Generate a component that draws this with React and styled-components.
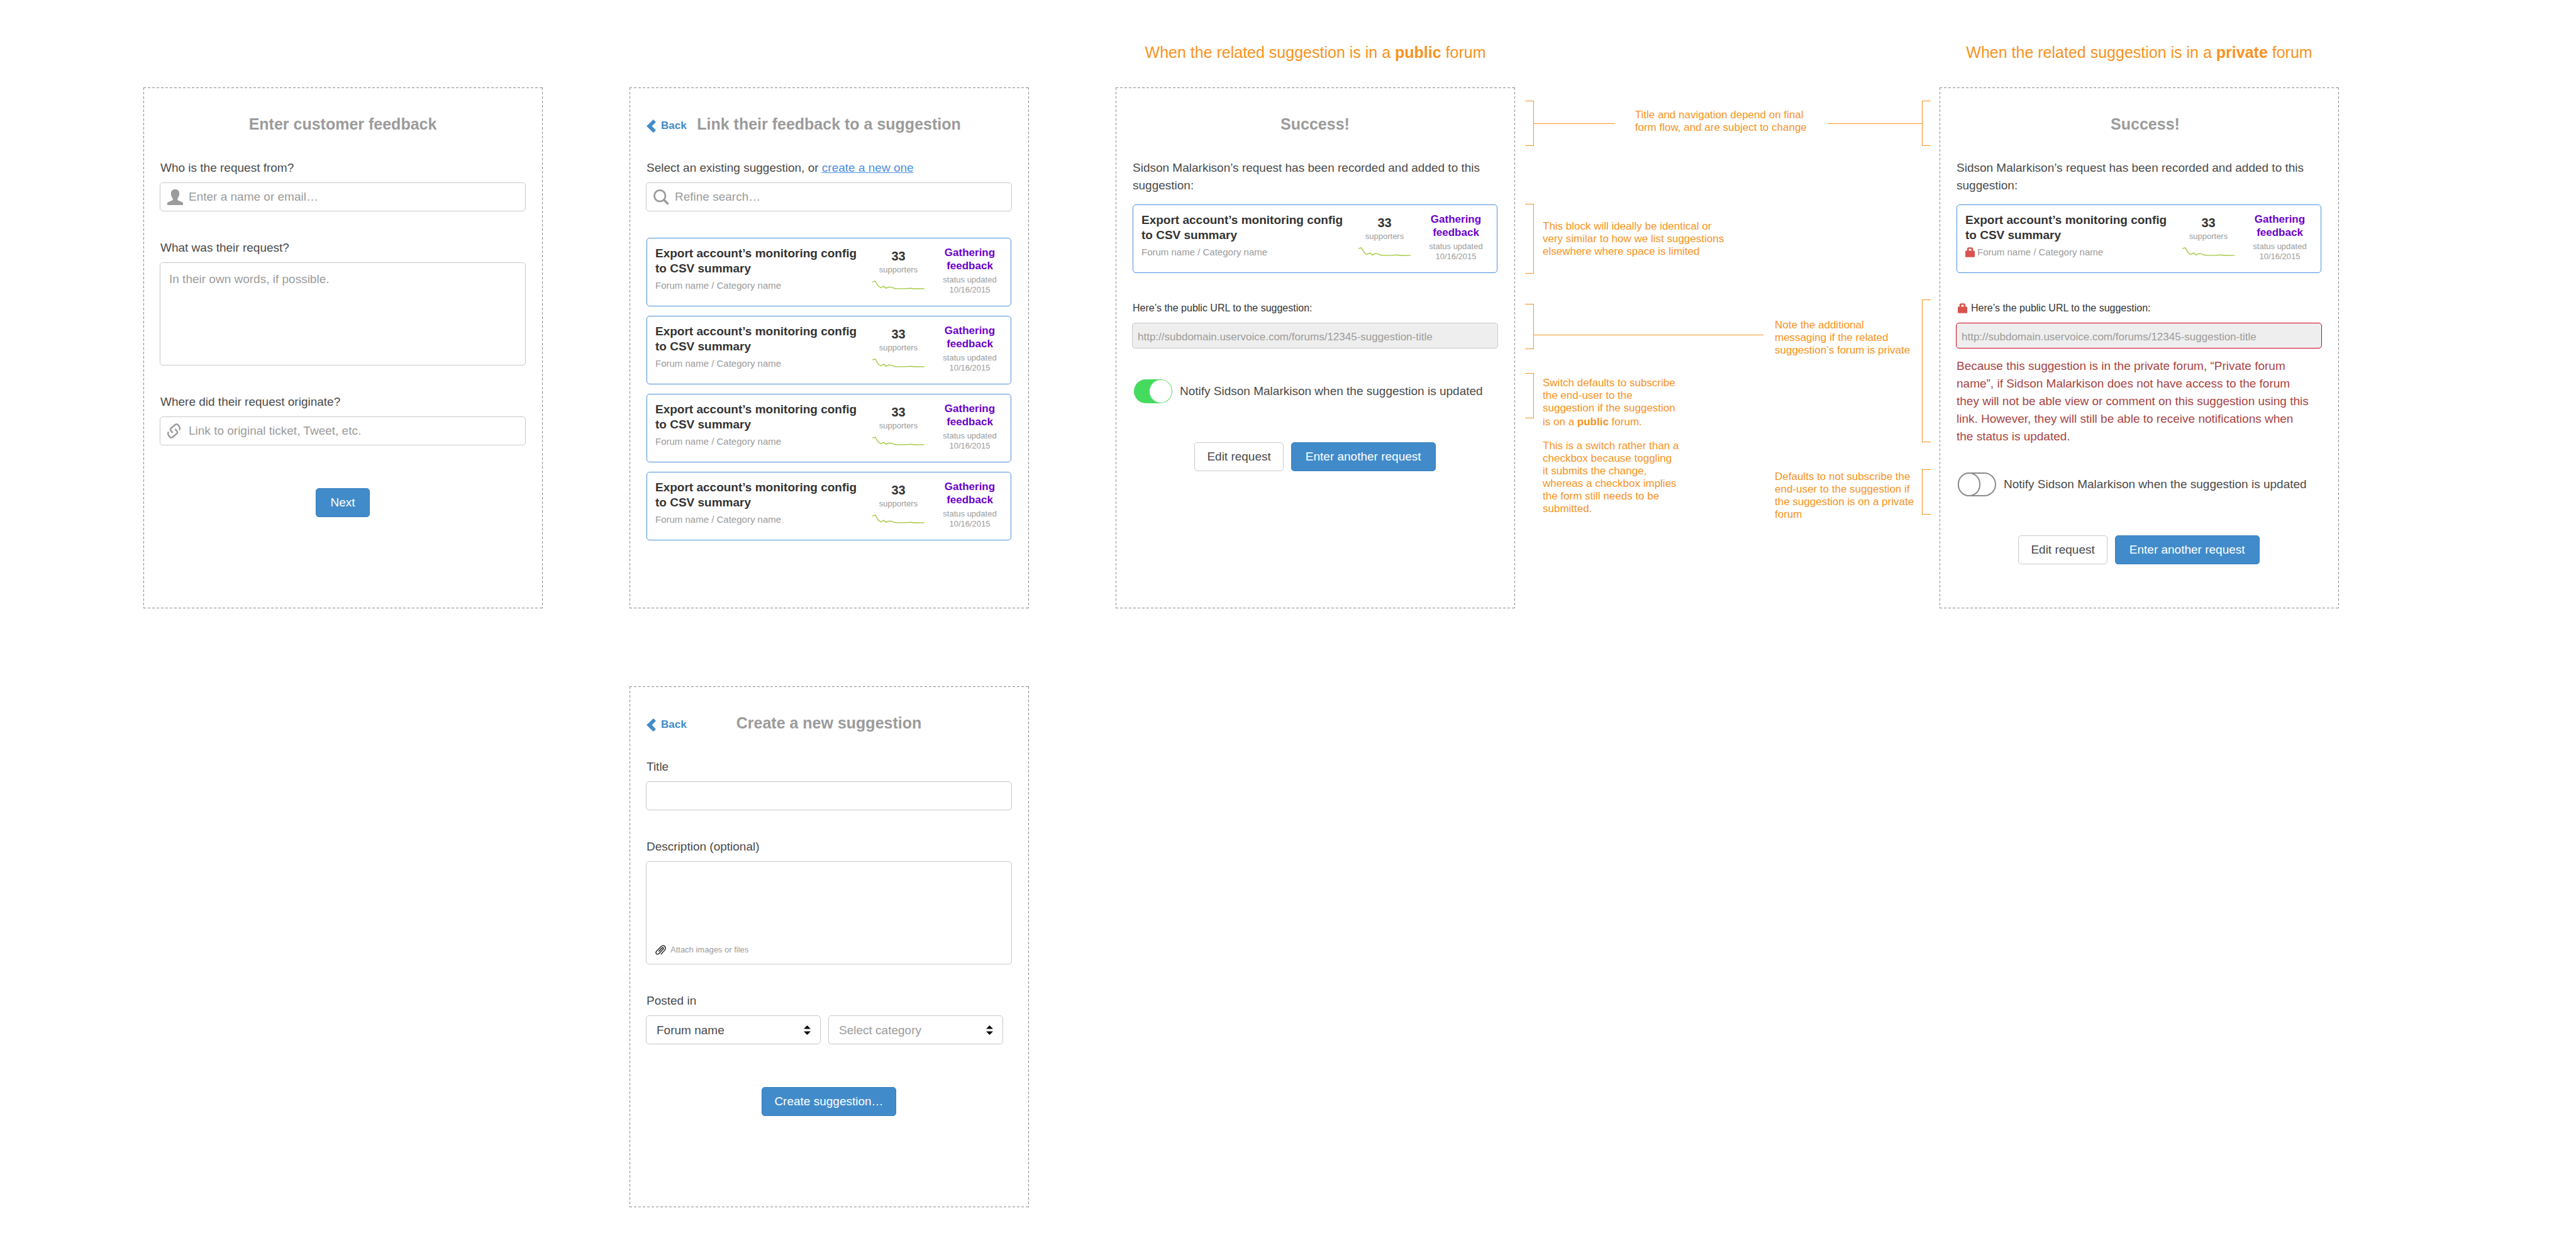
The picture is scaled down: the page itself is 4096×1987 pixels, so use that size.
import React, { useId } from "react";
import styled, { createGlobalStyle, css } from "styled-components";

const c = {
  text: "#4a4a4a",
  dark: "#333333",
  muted: "#9b9b9b",
  line: "#c8c8c8",
  dash: "#8c8c8c",
  primary: "#428bca",
  primaryEdge: "#357ebd",
  link: "#4a90e2",
  status: "#6a00cc",
  note: "#f7931e",
  danger: "#d9534f",
  dangerText: "#a94442",
  error: "#d0021b",
};

const GlobalStyle = createGlobalStyle`
  *, *::before, *::after { box-sizing: border-box; }
  body { margin: 0; background: #ffffff; }
  body, button, input, textarea, select {
    font-family: "Liberation Sans", Arial, Helvetica, sans-serif;
  }
  h1, h2, h3, p, ul { margin: 0; padding: 0; }
`;

/* ---------- Board ---------- */

const Board = styled.main`
  display: grid;
  grid-template-columns: 635fr 138fr 635fr 138fr 635fr 675fr 635fr;
  grid-template-rows: auto auto auto;
  padding: 0 377px 68px 228px;
  color: ${c.text};
  font-size: 19px;
  line-height: 28px;
`;

const BoardHeading = styled.h1`
  grid-row: 1;
  grid-column: ${(p) => p.$col};
  padding: 68px 0 41px;
  font-size: 25px;
  line-height: 30px;
  font-weight: 400;
  text-align: center;
  color: ${c.note};
`;

const dashX = `repeating-linear-gradient(90deg, ${c.dash} 0 4px, transparent 4px 7px)`;
const dashY = `repeating-linear-gradient(180deg, ${c.dash} 0 4px, transparent 4px 7px)`;

const Panel = styled.section`
  grid-row: ${(p) => p.$row || 2};
  grid-column: ${(p) => p.$col};
  margin-top: ${(p) => (p.$row === 3 ? 124 : 0)}px;
  min-height: 828px;
  padding: 43px 27px 40px 26px;
  background:
    ${dashX} top / 100% 1px no-repeat,
    ${dashX} bottom / 100% 1px no-repeat,
    ${dashY} left / 1px 100% no-repeat,
    ${dashY} right / 1px 100% no-repeat;
`;

const PanelHeader = styled.header`
  display: grid;
  grid-template-columns: 1fr auto 1fr;
  margin-bottom: 41px;
  padding-left: ${(p) => p.$indent || 0}px;
`;

const PanelTitle = styled.h2`
  grid-column: 2;
  font-size: 25px;
  line-height: 30px;
  font-weight: 700;
  color: ${c.muted};
`;

const BackLink = styled.a`
  display: flex;
  align-items: center;
  align-self: end;
  justify-self: start;
  gap: 8px;
  height: 24px;
  padding-left: 1px;
  font-size: 17px;
  font-weight: 700;
  color: ${c.primary};
  text-decoration: none;
`;

const InlineLink = styled.a`
  color: ${c.link};
  text-decoration: underline;
`;

/* ---------- Form parts ---------- */

const Field = styled.div`
  display: flex;
  flex-direction: column;
  gap: 9px;
  & + & {
    margin-top: 44px;
  }
`;

const labelStyle = css`
  display: flex;
  align-items: center;
  gap: 6px;
  padding-left: ${(p) => (p.$icon ? 3 : 1)}px;
  font-size: ${(p) => (p.$small ? 16 : 19)}px;
  color: ${(p) => (p.$small ? c.dark : c.text)};
`;

const Label = styled.label`
  ${labelStyle}
`;

const GroupLabel = styled.span`
  ${labelStyle}
`;

const LeadText = styled.p`
  padding-left: 1px;
`;

const Box = styled.div`
  display: flex;
  align-items: center;
  height: 46px;
  padding: 0 12px 0 11px;
  gap: 9px;
  border: 1px solid ${c.line};
  border-radius: 5px;
  background: #ffffff;
`;

const IconSlot = styled.span`
  display: flex;
  flex: none;
  width: 25px;
`;

const bareControl = css`
  flex: 1;
  min-width: 0;
  margin: 0;
  padding: 0;
  border: 0;
  outline: 0;
  background: transparent;
  font-size: 19px;
  line-height: 28px;
  color: ${c.text};
  &::placeholder {
    color: ${c.muted};
    opacity: 1;
  }
`;

const BareInput = styled.input`
  ${bareControl}
`;

const AreaBox = styled.div`
  display: flex;
  flex-direction: column;
  align-items: flex-start;
  height: 164px;
  padding: 12px 14px;
  border: 1px solid ${c.line};
  border-radius: 5px;
`;

const BareTextarea = styled.textarea`
  ${bareControl}
  width: 100%;
  resize: none;
`;

const AttachButton = styled.button`
  display: flex;
  align-items: center;
  gap: 7px;
  padding: 0;
  border: 0;
  background: none;
  font-size: 13px;
  line-height: 20px;
  color: ${c.muted};
`;

const UrlInput = styled.input`
  width: 100%;
  height: 41px;
  padding: 4px 8px 0;
  border: 1px solid ${(p) => (p.$error ? c.error : c.line)};
  border-radius: 5px;
  outline: 0;
  background: #eeeeee;
  font-size: 17px;
  color: ${c.muted};
`;

const ErrorText = styled.p`
  margin-top: 14px;
  padding-left: 1px;
  color: ${c.dangerText};
`;

const SelectRow = styled.div`
  display: flex;
  gap: 12px;
  padding-right: 14px;
`;

const SelectBox = styled.div`
  position: relative;
  flex: 1;
  & > svg {
    position: absolute;
    top: 16px;
    right: 16px;
    pointer-events: none;
  }
`;

const Select = styled.select`
  width: 100%;
  height: 46px;
  padding: 0 40px 0 16px;
  appearance: none;
  border: 1px solid ${c.line};
  border-radius: 5px;
  background: #ffffff;
  font-size: 19px;
  color: ${(p) => (p.$empty ? c.muted : c.text)};
`;

const Actions = styled.div`
  display: flex;
  justify-content: center;
  gap: 12px;
  margin-top: ${(p) => p.$gap}px;
`;

const Button = styled.button`
  height: 46px;
  padding: 0 ${(p) => (p.$wide ? 22 : 19)}px;
  border: 1px solid ${(p) => (p.$primary ? c.primaryEdge : c.line)};
  border-radius: 5px;
  background: ${(p) => (p.$primary ? c.primary : "#ffffff")};
  font-size: 19px;
  color: ${(p) => (p.$primary ? "#ffffff" : c.text)};
`;

const SwitchRow = styled.div`
  display: flex;
  align-items: center;
  gap: 12px;
  margin-top: ${(p) => p.$gap}px;
  padding-left: 3px;
`;

const Switch = styled.input`
  position: relative;
  flex: none;
  width: 61px;
  height: 38px;
  margin: 0;
  appearance: none;
  border: 2px solid #8c8c8c;
  border-radius: 19px;
  background: #ffffff;
  &::before {
    content: "";
    position: absolute;
    top: -2px;
    left: -2px;
    width: 36px;
    height: 38px;
    border: 2px solid #8c8c8c;
    border-radius: 19px;
    background: #ffffff;
  }
  &:checked {
    border: 0;
    background: #44db5e;
  }
  &:checked::before {
    top: 1px;
    left: auto;
    right: 1px;
    width: 35px;
    height: 36px;
    border: 0;
  }
`;

/* ---------- Suggestion card ---------- */

const CardList = styled.ul`
  display: flex;
  flex-direction: column;
  gap: 15px;
  margin-top: 42px;
  list-style: none;
`;

const Card = styled.article`
  display: flex;
  gap: 12px;
  margin: ${(p) => (p.$spaced ? "16px 1px 42px" : "0 1px")};
  padding: 12px 21px 17px 13px;
  border: 1px solid ${c.link};
  border-radius: 5px;
`;

const CardMain = styled.div`
  flex: 1;
  line-height: 24px;
`;

const CardTitle = styled.h3`
  font-size: 19px;
  font-weight: 700;
  color: ${c.dark};
`;

const CardMeta = styled.p`
  display: flex;
  align-items: center;
  gap: 4px;
  margin-top: 3px;
  font-size: 15px;
  color: ${c.muted};
`;

const CardSide = styled.div`
  display: flex;
  gap: 28px;
  text-align: center;
`;

const Stats = styled.div`
  width: 83px;
  padding-top: 4px;
`;

const Count = styled.p`
  font-size: 20px;
  line-height: 24px;
  font-weight: 700;
  color: ${c.dark};
`;

const Small = styled.p`
  margin-top: ${(p) => p.$top}px;
  font-size: 13px;
  line-height: 16px;
  color: ${c.muted};
`;

const StatusBlock = styled.div`
  width: 88px;
`;

const Status = styled.p`
  font-size: 17px;
  line-height: 21px;
  font-weight: 700;
  color: ${c.status};
`;

const Spark = styled.svg`
  display: block;
  margin-top: 9px;
`;

/* ---------- Annotations ---------- */

const Notes = styled.aside`
  grid-row: 2;
  grid-column: 6;
  padding: 21px 14px 0 16px;
  font-size: 17px;
  line-height: 20px;
  color: ${c.note};
`;

const NoteRow = styled.div`
  display: flex;
  align-items: ${(p) => (p.$center ? "center" : "flex-start")};
  margin-top: ${(p) => p.$gap || 0}px;
`;

const Bracket = styled.span`
  flex: none;
  width: 14px;
  height: ${(p) => p.$h}px;
  border: 1px solid ${c.note};
  border-left-width: ${(p) => (p.$open === "left" ? 0 : 1)}px;
  border-right-width: ${(p) => (p.$open === "left" ? 1 : 0)}px;
`;

const Rule = styled.span`
  flex: ${(p) => p.$grow};
  height: 1px;
  margin: ${(p) => p.$top || 0}px ${(p) => p.$end || 0}px 0 0;
  background: ${c.note};
`;

const SharedNote = styled.p`
  padding: 0 33px 6px 32px;
`;

const SideNote = styled.div`
  width: ${(p) => p.$w || 225}px;
  margin-left: 14px;
  padding-top: ${(p) => p.$top || 0}px;
  strong {
    line-height: 24px;
  }
  p + p {
    margin-top: 16px;
  }
`;

const EdgeNote = styled.p`
  width: 225px;
  margin-right: 9px;
  padding-top: ${(p) => p.$top}px;
`;

const Lanes = styled.div`
  display: flex;
  margin-top: 41px;
`;

const StartLane = styled.div`
  flex: 1;
  padding-top: 7px;
`;

const EndLane = styled.div`
  flex: none;
`;

/* ---------- Drawings ---------- */

const PersonIcon = () => (
  <svg width="25" height="25" viewBox="0 0 36 36" fill={c.muted} aria-hidden="true">
    <path d="M18 0C23.5 0 27.6 3.5 27.6 9.5C27.6 14 26 18 23.5 20.5V24C24.5 25.5 33 28 36 30.5V36H0V30.5C3 28 11.5 25.5 12.5 24V20.5C10 18 8.4 14 8.4 9.5C8.4 3.5 12.5 0 18 0Z" />
  </svg>
);

const LinkIcon = () => (
  <svg width="21" height="24" viewBox="0 0 93 106" fill="none" stroke={c.muted} strokeWidth="11" aria-hidden="true">
    <path d="M84 47L88 39Q90 33 86 27L76 11Q68 2 58 8L25 35Q19 42 24 50L38 67" />
    <path d="M9 59L5 67Q3 73 7 79L17 95Q25 104 35 98L68 71Q74 64 69 56L55 39" />
  </svg>
);

const SearchIcon = () => (
  <svg width="25" height="25" viewBox="0 0 36 36" fill="none" stroke={c.muted} aria-hidden="true">
    <circle cx="14.7" cy="14.7" r="12.7" strokeWidth="4" />
    <path d="M23.5 23.5L34 34" strokeWidth="5" />
  </svg>
);

const ChevronIcon = () => (
  <svg width="15" height="21" viewBox="0 0 22 31" fill={c.primary} aria-hidden="true">
    <path d="M0 15.5L16 0L22 6L12.5 15.5L22 25L16 31Z" />
  </svg>
);

const LockIcon = () => (
  <svg width="15" height="16" viewBox="0 0 22 23" fill={c.danger} aria-hidden="true">
    <path
      fillRule="evenodd"
      d="M4 8V4Q4 0 8 0H14Q18 0 18 4V8H20Q22 8 22 10V21Q22 23 20 23H2Q0 23 0 21V10Q0 8 2 8ZM8 8H14V4.5Q14 3.5 13 3.5H9Q8 3.5 8 4.5Z"
    />
  </svg>
);

const ClipIcon = () => (
  <svg width="17" height="16" viewBox="0 0 24 22" fill="none" stroke="#111111" strokeWidth="1.9" aria-hidden="true">
    <path d="M12.5 21L21 11.5C24 8 23 2.5 19 1.5C16.5 .9 14.5 2 13 3.5L2.5 14C.3 17 1.5 20.8 4.5 20.8C6 20.8 7.2 20 8.2 19L17.8 9C19.3 7 17.5 4.8 15.5 6.2L7.5 14.5" />
  </svg>
);

const SortIcon = () => (
  <svg width="11" height="15" viewBox="0 0 11 15" fill="#000000" aria-hidden="true">
    <path d="M5.5 0L11 5.5H0ZM5.5 15L11 9.5H0Z" />
  </svg>
);

const Sparkline = () => (
  <Spark width="83" height="14" viewBox="0 0 120 20" fill="none" stroke="#a2c63a" strokeWidth="2" aria-hidden="true">
    <path d="M0 3L6.7 1L13 12L19.6 16.5L25.7 13L32 17.5L38 14.5L44.7 15.3L51 18L57.5 18.5H75L90 17.5L95 18.7L120 18.5" />
  </Spark>
);

/* ---------- Composed pieces ---------- */

function TextField({ label, icon, placeholder }) {
  const id = useId();
  return (
    <Field>
      <Label htmlFor={id}>{label}</Label>
      <Box>
        {icon && <IconSlot>{icon}</IconSlot>}
        <BareInput id={id} type="text" placeholder={placeholder} />
      </Box>
    </Field>
  );
}

function AreaField({ label, placeholder, children }) {
  const id = useId();
  return (
    <Field>
      <Label htmlFor={id}>{label}</Label>
      <AreaBox>
        <BareTextarea id={id} placeholder={placeholder} />
        {children}
      </AreaBox>
    </Field>
  );
}

function UrlField({ locked }) {
  const id = useId();
  return (
    <Field>
      <Label htmlFor={id} $small $icon={locked}>
        {locked && <LockIcon />}
        Here’s the public URL to the suggestion:
      </Label>
      <UrlInput
        id={id}
        type="text"
        readOnly
        $error={locked}
        value="http://subdomain.uservoice.com/forums/12345-suggestion-title"
      />
    </Field>
  );
}

function SuggestionCard({ locked, spaced }) {
  return (
    <Card $spaced={spaced}>
      <CardMain>
        <CardTitle>
          Export account’s monitoring config
          <br />
          to CSV summary
        </CardTitle>
        <CardMeta>
          {locked && <LockIcon />}
          Forum name / Category name
        </CardMeta>
      </CardMain>
      <CardSide>
        <Stats>
          <Count>33</Count>
          <Small $top={2}>supporters</Small>
          <Sparkline />
        </Stats>
        <StatusBlock>
          <Status>Gathering feedback</Status>
          <Small $top={4}>status updated 10/16/2015</Small>
        </StatusBlock>
      </CardSide>
    </Card>
  );
}

function NotifySwitch({ on, gap }) {
  const id = useId();
  return (
    <SwitchRow $gap={gap}>
      <Switch id={id} type="checkbox" role="switch" defaultChecked={on} />
      <label htmlFor={id}>Notify Sidson Malarkison when the suggestion is updated</label>
    </SwitchRow>
  );
}

function Back() {
  return (
    <BackLink href="#back">
      <ChevronIcon />
      Back
    </BackLink>
  );
}

function ForumSelect({ label, option, empty }) {
  return (
    <SelectBox>
      <Select aria-label={label} $empty={empty} defaultValue={option}>
        <option>{option}</option>
      </Select>
      <SortIcon />
    </SelectBox>
  );
}

function SuccessPanel({ col, locked }) {
  return (
    <Panel $col={col}>
      <PanelHeader $indent={locked ? 20 : 0}>
        <PanelTitle>Success!</PanelTitle>
      </PanelHeader>
      <LeadText>
        Sidson Malarkison’s request has been recorded and added to this suggestion:
      </LeadText>
      <SuggestionCard spaced locked={locked} />
      <UrlField locked={locked} />
      {locked && (
        <ErrorText>
          Because this suggestion is in the private forum, “Private forum
          <br />
          name”, if Sidson Malarkison does not have access to the forum
          <br />
          they will not be able view or comment on this suggestion using this
          <br />
          link. However, they will still be able to receive notifications when
          <br />
          the status is updated.
        </ErrorText>
      )}
      <NotifySwitch on={!locked} gap={locked ? 43 : 49} />
      <Actions $gap={62}>
        <Button type="button">Edit request</Button>
        <Button type="button" $primary $wide>
          Enter another request
        </Button>
      </Actions>
    </Panel>
  );
}

export default function App() {
  const searchId = useId();
  return (
    <>
      <GlobalStyle />
      <Board>
        <BoardHeading $col={5}>
          When the related suggestion is in a <strong>public</strong> forum
        </BoardHeading>
        <BoardHeading $col={7}>
          When the related suggestion is in a <strong>private</strong> forum
        </BoardHeading>

        <Panel $col={1}>
          <PanelHeader>
            <PanelTitle>Enter customer feedback</PanelTitle>
          </PanelHeader>
          <TextField label="Who is the request from?" icon={<PersonIcon />} placeholder="Enter a name or email…" />
          <AreaField label="What was their request?" placeholder="In their own words, if possible." />
          <TextField
            label="Where did their request originate?"
            icon={<LinkIcon />}
            placeholder="Link to original ticket, Tweet, etc."
          />
          <Actions $gap={68}>
            <Button type="button" $primary $wide>
              Next
            </Button>
          </Actions>
        </Panel>

        <Panel $col={3}>
          <PanelHeader>
            <Back />
            <PanelTitle>Link their feedback to a suggestion</PanelTitle>
          </PanelHeader>
          <Field>
            <LeadText>
              <label htmlFor={searchId}>Select an existing suggestion, or </label>
              <InlineLink href="#new">create a new one</InlineLink>
            </LeadText>
            <Box>
              <IconSlot>
                <SearchIcon />
              </IconSlot>
              <BareInput id={searchId} type="text" placeholder="Refine search…" />
            </Box>
          </Field>
          <CardList>
            {[1, 2, 3, 4].map((n) => (
              <li key={n}>
                <SuggestionCard />
              </li>
            ))}
          </CardList>
        </Panel>

        <SuccessPanel col={5} />

        <Notes>
          <NoteRow $center>
            <Bracket $open="left" $h={72} />
            <Rule $grow={6} />
            <SharedNote>
              Title and navigation depend on final
              <br />
              form flow, and are subject to change
            </SharedNote>
            <Rule $grow={7} />
            <Bracket $open="right" $h={72} />
          </NoteRow>
          <NoteRow $center $gap={92}>
            <Bracket $open="left" $h={111} />
            <SideNote $w={295}>
              <p>This block will ideally be identical or very similar to how we list suggestions elsewhere where space is limited</p>
            </SideNote>
          </NoteRow>
          <Lanes>
            <StartLane>
              <NoteRow>
                <Bracket $open="left" $h={72} />
                <Rule $grow={1} $top={49} $end={18} />
              </NoteRow>
              <NoteRow $gap={38}>
                <Bracket $open="left" $h={72} />
                <SideNote $top={6}>
                  <p>
                    Switch defaults to subscribe the end-user to the suggestion if the suggestion is on a{" "}
                    <strong>public</strong> forum.
                  </p>
                  <p>
                    This is a switch rather than a checkbox because toggling
                    <br />
                    it submits the change, whereas a checkbox implies the form still needs to be submitted.
                  </p>
                </SideNote>
              </NoteRow>
            </StartLane>
            <EndLane>
              <NoteRow>
                <EdgeNote $top={31}>Note the additional messaging if the related suggestion’s forum is private</EdgeNote>
                <Bracket $open="right" $h={227} />
              </NoteRow>
              <NoteRow $gap={43}>
                <EdgeNote $top={2}>
                  Defaults to not subscribe the end-user to the suggestion if the suggestion is on a private forum
                </EdgeNote>
                <Bracket $open="right" $h={72} />
              </NoteRow>
            </EndLane>
          </Lanes>
        </Notes>

        <SuccessPanel col={7} locked />

        <Panel $col={3} $row={3}>
          <PanelHeader>
            <Back />
            <PanelTitle>Create a new suggestion</PanelTitle>
          </PanelHeader>
          <TextField label="Title" />
          <AreaField label="Description (optional)">
            <AttachButton type="button">
              <ClipIcon />
              Attach images or files
            </AttachButton>
          </AreaField>
          <Field role="group" aria-labelledby="posted-in">
            <GroupLabel id="posted-in">Posted in</GroupLabel>
            <SelectRow>
              <ForumSelect label="Forum" option="Forum name" />
              <ForumSelect label="Category" option="Select category" empty />
            </SelectRow>
          </Field>
          <Actions $gap={68}>
            <Button type="button" $primary>
              Create suggestion…
            </Button>
          </Actions>
        </Panel>
      </Board>
    </>
  );
}
